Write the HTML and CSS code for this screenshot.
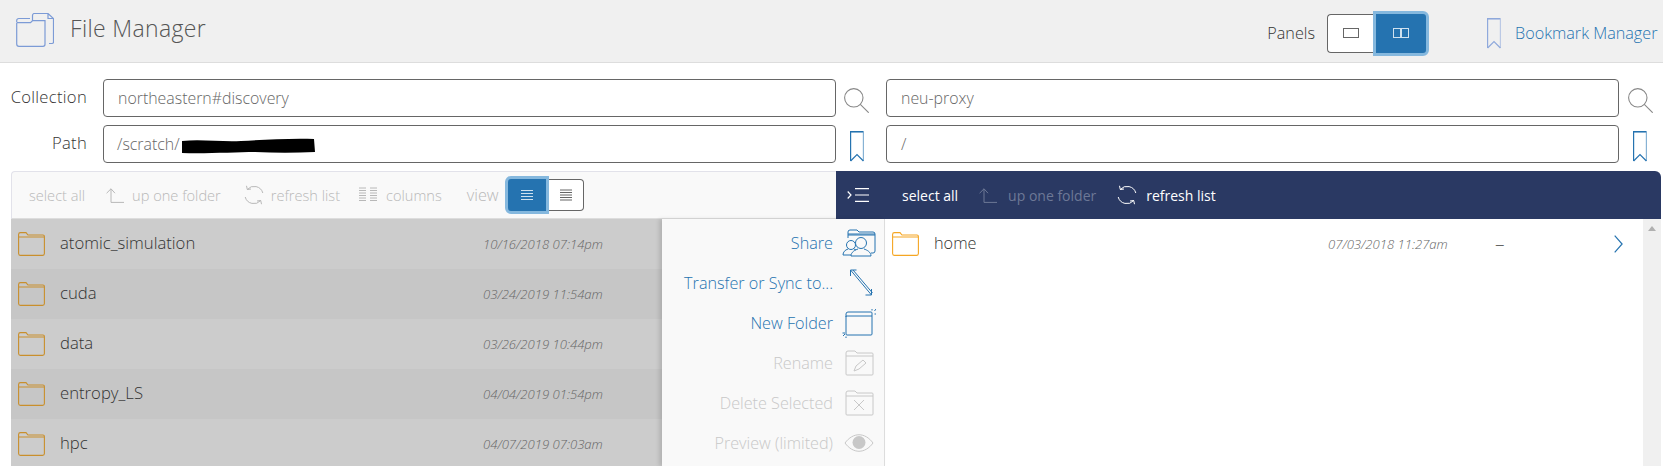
FILE: index.html
```html
<!DOCTYPE html>
<html lang="en">
<head>
<meta charset="utf-8">
<title>File Manager</title>
<link rel="stylesheet" href="styles.css">
</head>
<body>
<svg class="defs" width="0" height="0" aria-hidden="true">
  <defs>
    <symbol id="folder" viewBox="0 0 27 24">
      <path d="M.6 5V2.500A1.900 1.900 0 0 1 2.500.6h5.500l2 2.400h15a1.400 1.400 0 0 1 1.400 1.400V21.500a1.900 1.900 0 0 1-1.900 1.900H2.500a1.900 1.900 0 0 1-1.900-1.900V5h25.800" fill="none" stroke="currentColor" stroke-width="1.100"/>
    </symbol>
    <symbol id="search" viewBox="0 0 25 25">
      <circle cx="9.800" cy="9.800" r="9.200" fill="none" stroke="currentColor" stroke-width="1.100"/>
      <path d="M16.300 16.300l8.400 8.400" stroke="currentColor" stroke-width="1.100"/>
    </symbol>
    <symbol id="bookmark" viewBox="0 0 14 31">
      <path d="M.6 30V.6h12.800" fill="none" stroke="currentColor" stroke-width="1.200"/>
      <path d="M.6 30l6.400-6.400 6.400 6.400" fill="none" stroke="currentColor" stroke-width="1.200"/>
      <path d="M.6 1.200h12.800V30" fill="none" stroke="currentColor" stroke-opacity=".55" stroke-width="1.200"/>
    </symbol>
    <symbol id="up" viewBox="0 0 18 15">
      <path d="M.6 5.200L5 .8l4 4.400M5 .8v13.600h13" fill="none" stroke="currentColor" stroke-width="1"/>
    </symbol>
    <symbol id="refresh" viewBox="0 0 20 20">
      <path d="M3.300 4.500A9 9 0 0 1 18.800 8M16.700 15.500A9 9 0 0 1 1.200 12M2.500 .8l.8 3.700 3.700-.5M17.500 19.200l-.8-3.700-3.700.5" fill="none" stroke="currentColor" stroke-width="1"/>
    </symbol>
    <symbol id="lines" viewBox="0 0 14 12">
      <path d="M1 1.500h12M1 4.500h12M1 7.500h12M1 10.500h12" stroke="currentColor" stroke-width="1"/>
    </symbol>
  </defs>
</svg>

<header class="topbar">
  <div class="brand">
    <svg class="brand-icon" viewBox="0 0 38 34" aria-hidden="true">
      <path d="M.7 9V7.500a2 2 0 0 1 2-2h11.300M.7 9.700h13.800l2-2V2.500a2 2 0 0 1 2-2h13.500l5.500 5V29a1.500 1.500 0 0 1-1.500 1.500h-3M32 .5v5h5.500M.7 9.700V31a2.300 2.300 0 0 0 2.300 2.300h24a2 2 0 0 0 2-2V7.700h-12.500" fill="none" stroke="#7c9bd6" stroke-width="1.200"/>
    </svg>
    <h1 class="brand-title">File Manager</h1>
  </div>
  <div class="panels">
    <span class="panels-label">Panels</span>
    <div class="toggle">
      <span class="toggle-btn"><span class="glyph-one"></span></span>
      <span class="toggle-btn on"><span class="glyph-two"></span><span class="glyph-two"></span></span>
    </div>
  </div>
  <a class="bookmark-link">
    <svg class="bm-top"><use href="#bookmark"/></svg>
    <span>Bookmark Manager</span>
  </a>
</header>

<section class="fields">
  <div class="field-row">
    <label class="field-label">Collection</label>
    <div class="input"><span>northeastern#discovery</span></div>
    <svg class="search-icon"><use href="#search"/></svg>
    <div class="input"><span>neu-proxy</span></div>
    <svg class="search-icon last"><use href="#search"/></svg>
  </div>
  <div class="field-row">
    <label class="field-label">Path</label>
    <div class="input path-input">
      <span>/scratch/</span>
      <svg class="redact" viewBox="0 0 134 16" aria-hidden="true"><path d="M1 3C20 1 40 4 60 3c20-1 50-3 73-2l1 13c-20 1-40 1-60 0-20 0-50 2-73 1z" fill="#000"/></svg>
    </div>
    <svg class="bm-field"><use href="#bookmark"/></svg>
    <div class="input"><span>/</span></div>
    <svg class="bm-field last"><use href="#bookmark"/></svg>
  </div>
</section>

<main class="manager">
  <div class="tool-left">
    <span class="tool t-select">select all</span>
    <span class="tool t-up"><svg class="ti-up"><use href="#up"/></svg>up one folder</span>
    <span class="tool t-refresh"><svg class="ti-re"><use href="#refresh"/></svg>refresh list</span>
    <span class="tool t-columns"><svg class="ti-col" viewBox="0 0 18 16"><path d="M0 1h7M0 3.500h7M0 6h7M0 8.500h7M0 11h7M0 13.500h7M11 1h7M11 3.500h7M11 6h7M11 8.500h7M11 11h7M11 13.500h7" stroke="currentColor"/></svg>columns</span>
    <span class="tool t-view">view</span>
    <div class="view-toggle">
      <span class="view-btn on"><svg class="vi"><use href="#lines"/></svg></span>
      <span class="view-btn"><svg class="vi" viewBox="0 0 14 12"><path d="M1 1h12M1 3.500h12M1 6h12M1 8.500h12M1 11h12" stroke="currentColor"/></svg></span>
    </div>
  </div>
  <div class="tool-right">
    <svg class="collapse" viewBox="0 0 22 14" aria-hidden="true"><path d="M.7 3.500L4 7 .7 10.500M8 .7h14M8 7h14M8 13.300h14" fill="none" stroke="#fff" stroke-width="1.200"/></svg>
    <span class="tool-w first">select all</span>
    <span class="tool-w dim"><svg class="ti-up"><use href="#up"/></svg>up one folder</span>
    <span class="tool-w"><svg class="ti-re"><use href="#refresh"/></svg>refresh list</span>
  </div>

  <ul class="list-left">
    <li class="row"><svg class="folder"><use href="#folder"/></svg><span class="name">atomic_simulation</span><span class="date">10/16/2018 07:14pm</span></li>
    <li class="row alt"><svg class="folder"><use href="#folder"/></svg><span class="name">cuda</span><span class="date">03/24/2019 11:54am</span></li>
    <li class="row"><svg class="folder"><use href="#folder"/></svg><span class="name">data</span><span class="date">03/26/2019 10:44pm</span></li>
    <li class="row alt"><svg class="folder"><use href="#folder"/></svg><span class="name">entropy_LS</span><span class="date">04/04/2019 01:54pm</span></li>
    <li class="row"><svg class="folder"><use href="#folder"/></svg><span class="name">hpc</span><span class="date">04/07/2019 07:03am</span></li>
  </ul>

  <nav class="actions">
    <a class="action"><span>Share</span>
      <svg class="ai" viewBox="0 0 34 30"><path d="M6 10V4a2 2 0 0 1 2-2h7l2 2h14a2 2 0 0 1 2 2v17a2 2 0 0 1-2 2h-2M6 7h27" fill="none" stroke="currentColor"/><path d="M6 6h27" stroke="currentColor" stroke-opacity=".5" stroke-width="2"/><circle cx="19" cy="15" r="5.500" fill="none" stroke="currentColor"/><path d="M9 28c0-4 4-6 7-7M29 28c0-4-4-6-7-7M9 28h20" fill="none" stroke="currentColor"/><circle cx="9" cy="17" r="4.500" fill="#f9f9f9" stroke="currentColor"/><path d="M1 27c0-3 2-5 5-6M12 21l2 1M1 27h8" fill="none" stroke="currentColor"/></svg>
    </a>
    <a class="action"><span>Transfer or Sync to...</span>
      <svg class="ai" viewBox="0 0 34 30"><path d="M8.500 2l21 25M8.500 2v6M8.500 2h6M29.500 27v-6M29.500 27h-6M11 2l19.500 23" fill="none" stroke="currentColor"/></svg>
    </a>
    <a class="action"><span>New Folder</span>
      <svg class="ai" viewBox="0 0 34 30"><path d="M4 9V6a2 2 0 0 1 2-2h23a1 1 0 0 1 1 1v21a1 1 0 0 1-1 1H5a1 1 0 0 1-1-1V8h26M32.500 3l1.500-2M32.500 6h2M30 1v1.500M1 28l2-2M.5 25h2.500M4 28.500v1.500" fill="none" stroke="currentColor"/></svg>
    </a>
    <a class="action off"><span>Rename</span>
      <svg class="ai" viewBox="0 0 34 30"><path d="M4 8V5a2 2 0 0 1 2-2h7l2 2h15a1 1 0 0 1 1 1v20a1 1 0 0 1-1 1H5a1 1 0 0 1-1-1V8h27M12 23l2-5 7-6 3 3-7 6z" fill="none" stroke="currentColor"/></svg>
    </a>
    <a class="action off"><span>Delete Selected</span>
      <svg class="ai" viewBox="0 0 34 30"><path d="M4 8V5a2 2 0 0 1 2-2h7l2 2h15a1 1 0 0 1 1 1v20a1 1 0 0 1-1 1H5a1 1 0 0 1-1-1V8h27M12 12l10 10M22 12L12 22" fill="none" stroke="currentColor"/></svg>
    </a>
    <a class="action off"><span>Preview (limited)</span>
      <svg class="ai" viewBox="0 0 34 30"><path d="M3 15c8-11 20-11 28 0-8 11-20 11-28 0z" fill="none" stroke="currentColor"/><circle cx="17" cy="14.500" r="6.500" fill="currentColor"/></svg>
    </a>
  </nav>

  <div class="list-right">
    <div class="row-r">
      <svg class="folder r"><use href="#folder"/></svg>
      <span class="name-r">home</span>
      <span class="date-r">07/03/2018 11:27am</span>
      <span class="dash">–</span>
      <svg class="chev" viewBox="0 0 9 18"><path d="M.7 .7l7.400 8.300-7.400 8.300" fill="none" stroke="#2573b0" stroke-width="1.200"/></svg>
    </div>
    <div class="scroll"><span class="arrow"></span></div>
  </div>
</main>
</body>
</html>
```

FILE: styles.css
```css
* { box-sizing: border-box; }
html, body { margin: 0; height: 466px; overflow: hidden; background: #fff; }
body { font-family: "Open Sans", "Lato", sans-serif; font-weight: 300; color: #333; }
.defs { position: absolute; }

.topbar { height: 63px; background: #f0f0f0; border-bottom: 1px solid #ddd; display: flex; align-items: center; }
.brand { display: flex; align-items: center; margin-left: 16px; flex: 1; margin-top: -2px; }
.brand-icon { width: 38px; height: 34px; }
.brand-title { margin: -5px 0 0 16px; font-size: 23px; font-weight: 300; color: #555; letter-spacing: .35px; }
.panels { display: flex; align-items: center; margin: 4px 58px 0 0; }
.panels-label { font-size: 16.200px; margin-right: 12px; color: #333; }
.toggle { display: flex; align-items: center; height: 39px; width: 102px; }
.toggle-btn { width: 46px; height: 39px; border: 1px solid #666; border-right: 0; border-radius: 4px 0 0 4px; background: #fff; display: flex; align-items: center; justify-content: center; }
.toggle-btn.on { width: 56px; height: 45px; background: #2573b0; border: 3px solid #85b8de; border-radius: 0 6px 6px 0; }
.glyph-one { width: 16px; height: 10px; border: 1px solid #666; }
.glyph-two { width: 8px; height: 10px; border: 1px solid #cfe1ef; }
.bookmark-link { display: flex; align-items: center; color: #2573b0; font-size: 16.200px; width: 176px; margin-top: 4px; white-space: nowrap; }
.bm-top { width: 14px; height: 31px; color: #8fa9dc; margin-right: 14px; }

.fields { padding-top: 16px; height: 108px; display: flex; flex-direction: column; gap: 8px; }
.field-row { display: flex; align-items: center; height: 38px; }
.field-label { width: 87px; text-align: right; font-size: 16.600px; letter-spacing: .3px; color: #333; margin: -3px 16px 0 0; font-weight: 300; white-space: nowrap; }
.input { width: 733px; height: 38px; border: 1px solid #666; border-radius: 4px; background: #fff; display: flex; align-items: center; font-size: 15.900px; color: #666; padding-left: 14px; flex: none; white-space: nowrap; }
.path-input { padding-left: 13px; }
.search-icon { width: 25px; height: 25px; color: #888; margin: 4px 17px 0 8px; flex: none; }
.search-icon.last { margin-right: 0; margin-left: 9px; }
.bm-field { width: 14px; height: 31px; color: #2573b0; margin: 4px 22px 0 14px; flex: none; }
.bm-field.last { margin: 4px 0 0 14px; }
.redact { width: 134px; height: 16px; margin: 4px 0 0 1px; flex: none; }

.manager { display: grid; grid-template-columns: 825px 1fr; grid-template-rows: 48px 1fr; margin: 0 2px 0 11px; height: 295px; position: relative; }
.tool-left { background: #f9f9f9; border: 1px solid #e2e2ea; border-bottom-color: #ddd; border-right: 0; border-radius: 4px 0 0 0; display: flex; align-items: center; padding-left: 17px; font-size: 14.600px; }
.tool { display: flex; align-items: center; white-space: nowrap; color: #b8b8b8; }
.t-up { margin-left: 21px; }
.t-refresh { margin-left: 23px; }
.t-columns { margin-left: 19px; }
.t-view { margin-left: 25px; font-size: 16.300px; }
.ti-up { width: 18px; height: 15px; margin-right: 8px; flex: none; }
.ti-re { width: 20px; height: 20px; margin-right: 7px; flex: none; }
.ti-col { width: 18px; height: 16px; margin-right: 9px; flex: none; }
.view-toggle { display: flex; align-items: center; margin-left: 6px; }
.view-btn { width: 35px; height: 32px; border: 1px solid #666; border-left: 0; border-radius: 0 4px 4px 0; background: #fff; display: flex; align-items: center; justify-content: center; color: #666; }
.view-btn.on { width: 44px; height: 38px; background: #2573b0; color: #cfe1ef; border: 3px solid #85b8de; border-radius: 6px 0 0 6px; }
.vi { width: 14px; height: 12px; }

.tool-right { background: #2a3963; color: #fff; display: flex; align-items: center; border-radius: 0 6px 0 0; font-size: 14px; font-weight: 400; }
.collapse { width: 22px; height: 14px; margin: 0 0 0 11px; flex: none; }
.tool-w { display: flex; align-items: center; white-space: nowrap; margin-left: 21px; }
.tool-w .ti-up { margin-right: 11px; }
.tool-w .ti-re { margin-right: 9px; }
.tool-w.first { margin-left: 33px; }
.tool-w.dim { color: #6d7896; }

.list-left { margin: 0; padding: 0; list-style: none; position: relative; overflow: hidden; }
.row { height: 50px; display: flex; align-items: center; padding-left: 7px; background: #cccccc; }
.row.alt { background: #c6c6c6; }
.folder { width: 27px; height: 24px; color: #c98f2c; flex: none; }
.name { font-size: 16.700px; margin: -3px 0 0 15px; width: 423px; color: #333; font-weight: 300; }
.date { font-size: 13.100px; font-style: italic; color: #666; white-space: nowrap; margin-top: -1px; }

.actions { position: absolute; left: 651px; top: 48px; width: 223px; height: 247px; background: #f9f9f9; border-right: 1px solid #ddd; box-shadow: -3px 0 4px rgba(0,0,0,.12); display: flex; flex-direction: column; padding-top: 4px; }
.action { display: flex; align-items: center; justify-content: flex-end; height: 40px; font-size: 16.200px; color: #2573b0; padding-right: 8px; white-space: nowrap; }
.action .ai { width: 34px; height: 30px; margin-left: 9px; flex: none; }
.action.off { color: #c8c8c8; }

.list-right { margin-left: 49px; display: flex; background: #fff; }
.row-r { flex: 1; height: 50px; display: flex; align-items: center; padding-left: 7px; }
.folder.r { color: #f5a623; }
.name-r { font-size: 16.300px; margin: -2px 0 0 15px; width: 394px; }
.date-r { font-size: 13.100px; font-style: italic; color: #666; width: 167px; white-space: nowrap; }
.dash { font-size: 19px; color: #555; width: 119px; }
.chev { width: 9px; height: 18px; }
.scroll { width: 18px; height: 100%; background: #f0f0f0; flex: none; display: flex; justify-content: center; padding-top: 7px; }
.arrow { width: 0; height: 0; border: 4px solid transparent; border-bottom: 5px solid #b0b0b0; border-top: 0; }
```
